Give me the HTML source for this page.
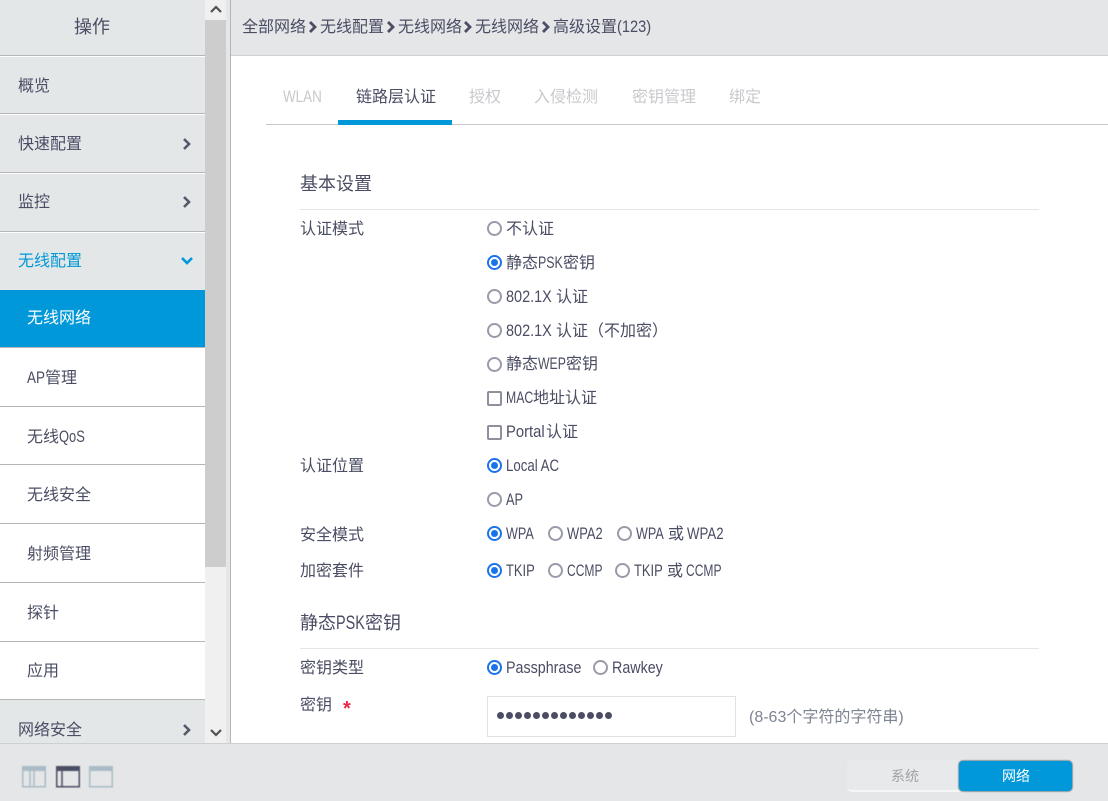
<!DOCTYPE html>
<html lang="zh"><head><meta charset="utf-8"><title>高级设置</title>
<style>
html,body{margin:0;padding:0;width:1108px;height:801px;overflow:hidden;background:#fff}
body{position:relative;font-family:"Liberation Sans","Noto Sans CJK SC",sans-serif;font-size:16px;color:#4a4d63}
.a{position:absolute;white-space:nowrap}
.t{position:absolute;white-space:nowrap;line-height:22px;margin-top:1px}
.t.n{margin-top:0}
.x{display:inline-block;transform-origin:0 50%;white-space:nowrap;font-size:17px;line-height:16px}
.nav{position:absolute;left:0;width:205px;box-sizing:border-box;background:#e3e7e8;border-bottom:1px solid #b5b5b5;border-top:1px solid #fff}
.r{position:absolute;width:11px;height:11px;border:2px solid #9a9aa8;border-radius:50%;background:#fff}
.r.on{border-color:#1a73e8}
.r.on:after{content:"";position:absolute;left:2px;top:2px;width:7px;height:7px;border-radius:50%;background:#1a73e8}
.c{position:absolute;width:11px;height:11px;border:2px solid #8f8f9d;border-radius:2px;background:#fff}
svg{position:absolute}
.b{filter:blur(.4px)}
.tab{position:absolute;top:87px;color:#c8c9cc;line-height:22px;white-space:nowrap}
</style></head><body>

<!-- sidebar -->
<div class="a" style="left:0;top:0;width:205px;height:55px;background:#e3e7e8;border-bottom:1px solid #b5b5b5"></div>
<div class="a" style="left:74px;top:14px;font-size:18px;line-height:26px">操作</div>
<div class="nav" style="top:56px;height:58px"></div>
<div class="nav" style="top:114px;height:59px"></div>
<div class="nav" style="top:173px;height:59px"></div>
<div class="nav" style="top:232px;height:59px;border-bottom:0"></div>
<div class="a" style="left:0;top:290px;width:205px;height:57px;background:#0098d8"></div>
<div class="a" style="left:0;top:347px;width:205px;height:1px;background:#b5b5b5"></div>
<div class="a" style="left:0;top:406px;width:205px;height:1px;background:#b5b5b5"></div>
<div class="a" style="left:0;top:464px;width:205px;height:1px;background:#b5b5b5"></div>
<div class="a" style="left:0;top:523px;width:205px;height:1px;background:#b5b5b5"></div>
<div class="a" style="left:0;top:582px;width:205px;height:1px;background:#b5b5b5"></div>
<div class="a" style="left:0;top:641px;width:205px;height:1px;background:#b5b5b5"></div>
<div class="a" style="left:0;top:699px;width:205px;height:1px;background:#b5b5b5"></div>
<div class="a" style="left:0;top:700px;width:205px;height:44px;background:#e3e7e8"></div>

<div class="t" style="left:18px;top:75px">概览</div>
<div class="t" style="left:18px;top:133px">快速配置</div>
<div class="t" style="left:18px;top:191px">监控</div>
<div class="t" style="left:18px;top:250px;color:#0098d8">无线配置</div>
<div class="t" style="left:27px;top:307px;color:#fff">无线网络</div>
<div class="t" style="left:27px;top:367px"><span class="x" style="width:18px;transform:scaleX(.79)">AP</span>管理</div>
<div class="t" style="left:27px;top:426px">无线<span class="x" style="width:26px;transform:scaleX(.76)">QoS</span></div>
<div class="t" style="left:27px;top:484px">无线安全</div>
<div class="t" style="left:27px;top:543px">射频管理</div>
<div class="t" style="left:27px;top:602px">探针</div>
<div class="t" style="left:27px;top:660px">应用</div>
<div class="t" style="left:18px;top:719px">网络安全</div>

<svg style="left:182px;top:137px" width="10" height="14" viewBox="0 0 10 14"><path d="M2 2l5 5-5 5" fill="none" stroke="#56596b" stroke-width="2.6"/></svg>
<svg style="left:182px;top:195px" width="10" height="14" viewBox="0 0 10 14"><path d="M2 2l5 5-5 5" fill="none" stroke="#56596b" stroke-width="2.6"/></svg>
<svg style="left:180px;top:256px" width="14" height="10" viewBox="0 0 14 10"><path d="M2 2l5 5 5-5" fill="none" stroke="#0098d8" stroke-width="2.6"/></svg>
<svg style="left:182px;top:723px" width="10" height="14" viewBox="0 0 10 14"><path d="M2 2l5 5-5 5" fill="none" stroke="#56596b" stroke-width="2.6"/></svg>

<!-- scrollbar -->
<div class="a" style="left:205px;top:0;width:21px;height:743px;background:#f0f0f0"></div>
<div class="a" style="left:205px;top:20px;width:21px;height:547px;background:#cdcdcd"></div>
<div class="a" style="left:226px;top:0;width:4px;height:743px;background:#e4e6e8"></div>
<div class="a" style="left:230px;top:0;width:1px;height:743px;background:#b5b5b5"></div>
<svg style="left:209px;top:3px" width="14" height="12" viewBox="0 0 14 12"><path d="M2 9l5-5 5 5" fill="none" stroke="#505050" stroke-width="2.2"/></svg>
<svg style="left:209px;top:727px" width="14" height="12" viewBox="0 0 14 12"><path d="M2 3l5 5 5-5" fill="none" stroke="#505050" stroke-width="2.2"/></svg>

<!-- breadcrumb -->
<div class="a" style="left:231px;top:0;width:877px;height:55px;background:#e4e6e8;border-bottom:1px solid #d0d0d0"></div>
<div class="t n" style="left:242px;top:17px">全部网络</div>
<div class="t n" style="left:320px;top:17px">无线配置</div>
<div class="t n" style="left:398px;top:17px">无线网络</div>
<div class="t n" style="left:475px;top:17px">无线网络</div>
<div class="t n" style="left:553px;top:17px">高级设置<span class="x" style="width:34px;transform:scaleX(.86)">(123)</span></div>
<svg style="left:308px;top:20px" width="10" height="14" viewBox="0 0 10 14"><path d="M2 2l5 5-5 5" fill="none" stroke="#4a4d63" stroke-width="2.8"/></svg>
<svg style="left:386px;top:20px" width="10" height="14" viewBox="0 0 10 14"><path d="M2 2l5 5-5 5" fill="none" stroke="#4a4d63" stroke-width="2.8"/></svg>
<svg style="left:463px;top:20px" width="10" height="14" viewBox="0 0 10 14"><path d="M2 2l5 5-5 5" fill="none" stroke="#4a4d63" stroke-width="2.8"/></svg>
<svg style="left:541px;top:20px" width="10" height="14" viewBox="0 0 10 14"><path d="M2 2l5 5-5 5" fill="none" stroke="#4a4d63" stroke-width="2.8"/></svg>

<!-- tabs -->
<div class="tab" style="left:283px"><span class="x" style="width:39px;transform:scaleX(.79)">WLAN</span></div>
<div class="tab" style="left:356px;color:#4a4d63">链路层认证</div>
<div class="tab" style="left:469px">授权</div>
<div class="tab" style="left:534px">入侵检测</div>
<div class="tab" style="left:632px">密钥管理</div>
<div class="tab" style="left:729px">绑定</div>
<div class="a" style="left:266px;top:124px;width:842px;height:1px;background:#c8c8c8"></div>
<div class="a" style="left:338px;top:120px;width:114px;height:5px;background:#0098d8"></div>

<!-- form -->
<div class="t n" style="left:300px;top:173px;font-size:18px">基本设置</div>
<div class="a" style="left:300px;top:209px;width:739px;height:1px;background:#e5e5e5"></div>

<div class="t" style="left:300px;top:218px">认证模式</div>
<div class="r" style="left:487px;top:221px"></div><div class="t" style="left:506px;top:218px">不认证</div>
<div class="r on" style="left:487px;top:255px"></div><div class="t" style="left:506px;top:252px">静态<span class="x" style="width:25px;transform:scaleX(.73)">PSK</span>密钥</div>
<div class="r" style="left:487px;top:289px"></div><div class="t" style="left:506px;top:286px"><span class="x" style="width:50px;transform:scaleX(.85)">802.1X</span>认证</div>
<div class="r" style="left:487px;top:323px"></div><div class="t" style="left:506px;top:320px"><span class="x" style="width:50px;transform:scaleX(.85)">802.1X</span>认证（不加密）</div>
<div class="r" style="left:487px;top:357px"></div><div class="t" style="left:506px;top:353px">静态<span class="x" style="width:28px;transform:scaleX(.72)">WEP</span>密钥</div>
<div class="c" style="left:487px;top:391px"></div><div class="t" style="left:506px;top:387px"><span class="x" style="width:27px;transform:scaleX(.72)">MAC</span>地址认证</div>
<div class="c" style="left:487px;top:425px"></div><div class="t" style="left:506px;top:421px"><span class="x" style="width:40px;transform:scaleX(.87)">Portal</span>认证</div>

<div class="t" style="left:300px;top:455px">认证位置</div>
<div class="r on" style="left:487px;top:458px"></div><div class="t" style="left:506px;top:455px"><span class="x" style="width:54px;transform:scaleX(.78)">Local AC</span></div>
<div class="r" style="left:487px;top:492px"></div><div class="t" style="left:506px;top:489px"><span class="x" style="width:17px;transform:scaleX(.75)">AP</span></div>

<div class="t" style="left:300px;top:524px">安全模式</div>
<div class="r on" style="left:487px;top:526px"></div><div class="t" style="left:506px;top:523px"><span class="x" style="width:29px;transform:scaleX(.74)">WPA</span></div>
<div class="r" style="left:548px;top:526px"></div><div class="t" style="left:567px;top:523px"><span class="x" style="width:37px;transform:scaleX(.76)">WPA2</span></div>
<div class="r" style="left:617px;top:526px"></div><div class="t" style="left:636px;top:523px"><span class="x" style="width:32px;transform:scaleX(.74)">WPA</span>或<span class="x" style="width:38px;margin-left:3px;transform:scaleX(.78)">WPA2</span></div>

<div class="t" style="left:300px;top:560px">加密套件</div>
<div class="r on" style="left:487px;top:563px"></div><div class="t" style="left:506px;top:560px"><span class="x" style="width:29px;transform:scaleX(.76)">TKIP</span></div>
<div class="r" style="left:548px;top:563px"></div><div class="t" style="left:567px;top:560px"><span class="x" style="width:35px;transform:scaleX(.71)">CCMP</span></div>
<div class="r" style="left:615px;top:563px"></div><div class="t" style="left:634px;top:560px"><span class="x" style="width:33px;transform:scaleX(.76)">TKIP</span>或<span class="x" style="width:35px;margin-left:3px;transform:scaleX(.71)">CCMP</span></div>

<div class="t n" style="left:300px;top:612px;font-size:18px">静态<span class="x" style="width:29px;font-size:19px;transform:scaleX(.76)">PSK</span>密钥</div>
<div class="a" style="left:300px;top:648px;width:739px;height:1px;background:#e5e5e5"></div>

<div class="t" style="left:300px;top:657px">密钥类型</div>
<div class="r on" style="left:487px;top:660px"></div><div class="t" style="left:506px;top:657px"><span class="x" style="width:74px;transform:scaleX(.84)">Passphrase</span></div>
<div class="r" style="left:593px;top:660px"></div><div class="t" style="left:612px;top:657px"><span class="x" style="width:51px;transform:scaleX(.84)">Rawkey</span></div>

<div class="t" style="left:300px;top:694px">密钥</div>
<div class="t" style="left:343px;top:697px;color:#e8294a;font-size:20px;font-weight:bold">*</div>
<div class="a" style="left:487px;top:696px;width:247px;height:39px;border:1px solid #e2e2e2;background:#fff"></div>
<div class="a" style="left:497px;top:711px;height:10px;width:115px;display:flex;justify-content:space-between">
<i style="width:7px;height:7px;margin-top:1px;border-radius:50%;background:#4a4d63"></i><i style="width:7px;height:7px;margin-top:1px;border-radius:50%;background:#4a4d63"></i><i style="width:7px;height:7px;margin-top:1px;border-radius:50%;background:#4a4d63"></i><i style="width:7px;height:7px;margin-top:1px;border-radius:50%;background:#4a4d63"></i><i style="width:7px;height:7px;margin-top:1px;border-radius:50%;background:#4a4d63"></i><i style="width:7px;height:7px;margin-top:1px;border-radius:50%;background:#4a4d63"></i><i style="width:7px;height:7px;margin-top:1px;border-radius:50%;background:#4a4d63"></i><i style="width:7px;height:7px;margin-top:1px;border-radius:50%;background:#4a4d63"></i><i style="width:7px;height:7px;margin-top:1px;border-radius:50%;background:#4a4d63"></i><i style="width:7px;height:7px;margin-top:1px;border-radius:50%;background:#4a4d63"></i><i style="width:7px;height:7px;margin-top:1px;border-radius:50%;background:#4a4d63"></i><i style="width:7px;height:7px;margin-top:1px;border-radius:50%;background:#4a4d63"></i><i style="width:7px;height:7px;margin-top:1px;border-radius:50%;background:#4a4d63"></i>
</div>
<div class="t" style="left:749px;top:706px;color:#7d8592">(8-63个字符的字符串)</div>

<!-- footer -->
<div class="a" style="left:0;top:743px;width:1108px;height:58px;background:#e4e6e8;border-top:1px solid #cfcfcf;box-sizing:border-box"></div>
<svg class="b" style="left:22px;top:766px" width="24" height="22" viewBox="0 0 24 22"><rect x=".75" y=".75" width="22.5" height="20" fill="none" stroke="#a9bbc6" stroke-width="1.5"/><rect x="0" y="0" width="24" height="5" fill="#a9bbc6"/><path d="M8 5v16M12 5v16" stroke="#a9bbc6" stroke-width="1.5"/></svg>
<svg class="b" style="left:56px;top:766px" width="24" height="22" viewBox="0 0 24 22"><rect x=".75" y=".75" width="22.5" height="20" fill="none" stroke="#4a4d63" stroke-width="1.5"/><rect x="0" y="0" width="24" height="5" fill="#4a4d63"/><path d="M6 5v16" stroke="#4a4d63" stroke-width="1.5"/></svg>
<svg class="b" style="left:89px;top:766px" width="24" height="22" viewBox="0 0 24 22"><rect x=".75" y=".75" width="22.5" height="20" fill="none" stroke="#a9bbc6" stroke-width="1.5"/><rect x="0" y="0" width="24" height="5" fill="#a9bbc6"/></svg>

<div class="a" style="left:847px;top:760px;width:126px;height:32px;background:#e8e9eb;border-radius:5px;border-bottom:2px solid #f6f6f6;box-sizing:border-box"></div>
<div class="a" style="left:959px;top:761px;width:113px;height:30px;background:#0098d8;border-radius:4px;box-shadow:0 0 1px 1px #8a9aa5"></div>
<div class="t n" style="left:891px;top:765px;font-size:14px;color:#a3a3a3">系统</div>
<div class="t n" style="left:1002px;top:765px;font-size:14px;color:#fff">网络</div>
</body></html>
